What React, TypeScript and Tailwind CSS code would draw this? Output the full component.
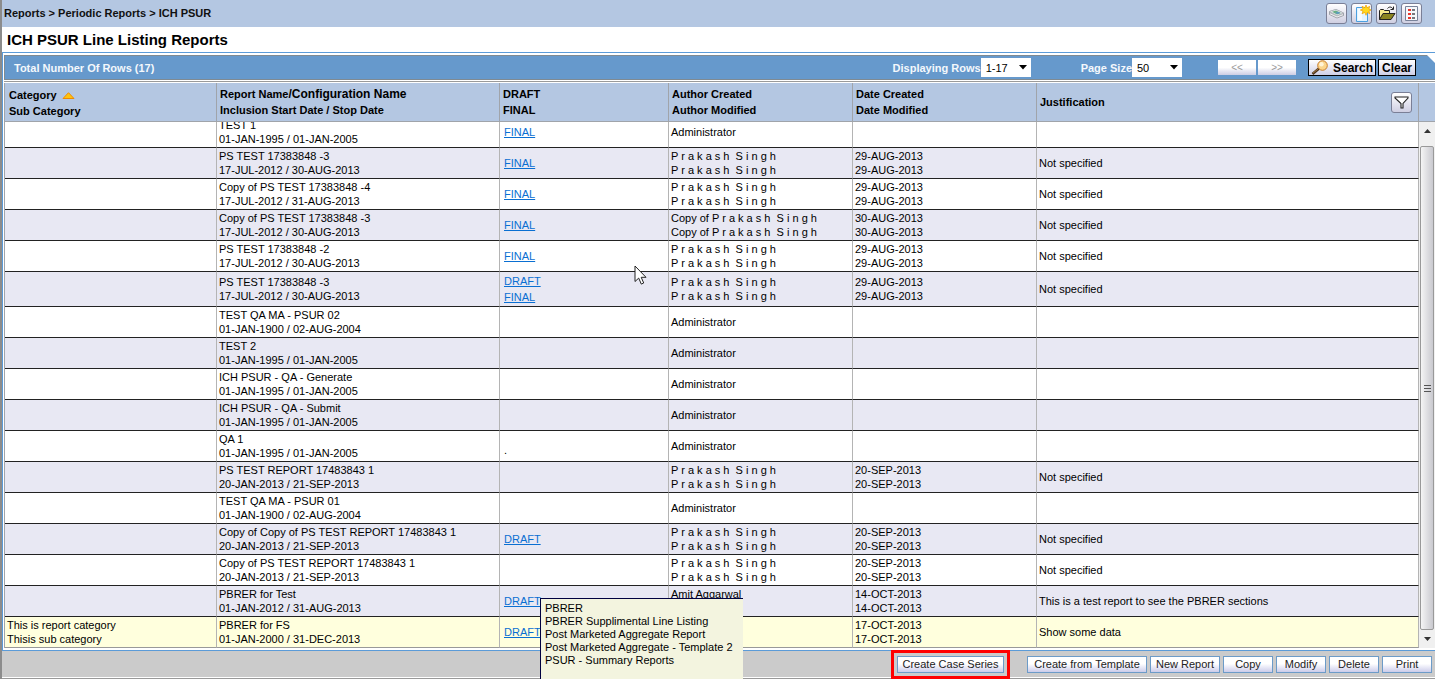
import { useState } from "react";
import clsx from "clsx";

interface ReportRow {
    id: number;
    category?: string[];
    name: string;
    dates: string;
    links: string[];
    authors: string[];
    modified: string[];
    justification?: string;
    note?: string;
}

const singh = "P r a k a s h  S i n g h";

const reports: ReportRow[] = [
    { id: 1, name: "TEST 1", dates: "01-JAN-1995 / 01-JAN-2005", links: ["FINAL"], authors: ["Administrator"], modified: [] },
    { id: 2, name: "PS TEST 17383848 -3", dates: "17-JUL-2012 / 30-AUG-2013", links: ["FINAL"], authors: [singh, singh], modified: ["29-AUG-2013", "29-AUG-2013"], justification: "Not specified" },
    { id: 3, name: "Copy of PS TEST 17383848 -4", dates: "17-JUL-2012 / 31-AUG-2013", links: ["FINAL"], authors: [singh, singh], modified: ["29-AUG-2013", "29-AUG-2013"], justification: "Not specified" },
    { id: 4, name: "Copy of PS TEST 17383848 -3", dates: "17-JUL-2012 / 30-AUG-2013", links: ["FINAL"], authors: ["Copy of " + singh, "Copy of " + singh], modified: ["30-AUG-2013", "30-AUG-2013"], justification: "Not specified" },
    { id: 5, name: "PS TEST 17383848 -2", dates: "17-JUL-2012 / 30-AUG-2013", links: ["FINAL"], authors: [singh, singh], modified: ["29-AUG-2013", "29-AUG-2013"], justification: "Not specified" },
    { id: 6, name: "PS TEST 17383848 -3", dates: "17-JUL-2012 / 30-AUG-2013", links: ["DRAFT", "FINAL"], authors: [singh, singh], modified: ["29-AUG-2013", "29-AUG-2013"], justification: "Not specified" },
    { id: 7, name: "TEST QA MA - PSUR 02", dates: "01-JAN-1900 / 02-AUG-2004", links: [], authors: ["Administrator"], modified: [] },
    { id: 8, name: "TEST 2", dates: "01-JAN-1995 / 01-JAN-2005", links: [], authors: ["Administrator"], modified: [] },
    { id: 9, name: "ICH PSUR - QA - Generate", dates: "01-JAN-1995 / 01-JAN-2005", links: [], authors: ["Administrator"], modified: [] },
    { id: 10, name: "ICH PSUR - QA - Submit", dates: "01-JAN-1995 / 01-JAN-2005", links: [], authors: ["Administrator"], modified: [] },
    { id: 11, name: "QA 1", dates: "01-JAN-1995 / 01-JAN-2005", links: [], authors: ["Administrator"], modified: [], note: "." },
    { id: 12, name: "PS TEST REPORT 17483843 1", dates: "20-JAN-2013 / 21-SEP-2013", links: [], authors: [singh, singh], modified: ["20-SEP-2013", "20-SEP-2013"], justification: "Not specified" },
    { id: 13, name: "TEST QA MA - PSUR 01", dates: "01-JAN-1900 / 02-AUG-2004", links: [], authors: ["Administrator"], modified: [] },
    { id: 14, name: "Copy of Copy of PS TEST REPORT 17483843 1", dates: "20-JAN-2013 / 21-SEP-2013", links: ["DRAFT"], authors: [singh, singh], modified: ["20-SEP-2013", "20-SEP-2013"], justification: "Not specified" },
    { id: 15, name: "Copy of PS TEST REPORT 17483843 1", dates: "20-JAN-2013 / 21-SEP-2013", links: [], authors: [singh, singh], modified: ["20-SEP-2013", "20-SEP-2013"], justification: "Not specified" },
    { id: 16, name: "PBRER for Test", dates: "01-JAN-2012 / 31-AUG-2013", links: ["DRAFT"], authors: ["Amit Aggarwal", ""], modified: ["14-OCT-2013", "14-OCT-2013"], justification: "This is a test report to see the PBRER sections" },
    { id: 17, category: ["This is report category", "Thisis sub category"], name: "PBRER for FS", dates: "01-JAN-2000 / 31-DEC-2013", links: ["DRAFT"], authors: [], modified: ["17-OCT-2013", "17-OCT-2013"], justification: "Show some data" },
];

const templates = [
    "PBRER",
    "PBRER Supplimental Line Listing",
    "Post Marketed Aggregate Report",
    "Post Marketed Aggregate - Template 2",
    "PSUR - Summary Reports",
];

const Columns = () => (
    <colgroup>
        <col className="w-[212px]" />
        <col className="w-[283px]" />
        <col className="w-[169px]" />
        <col className="w-[184px]" />
        <col className="w-[184px]" />
        <col />
    </colgroup>
);

const Lines = ({ items }: { items: string[] }) => (
    <>
        {items.map((item, index) => (
            <div key={index} className="h-[14px] whitespace-pre">{item}</div>
        ))}
    </>
);

// ---- ICONS ----

const DiskIcon = () => (
    <svg width="17" height="17" viewBox="0 0 17 17">
        <path d="M1.500 6.500 8 4.500l7.500 3.500v2.500L9 13 1.500 9.500z" fill="#b4b8bf" stroke="#8b9097" strokeWidth=".7" />
        <path d="M1.500 6.500 8 4.500l7.500 3.500L9 10.500z" fill="#eef1f2" stroke="#a5aab0" strokeWidth=".6" />
        <path d="M4 6.800 8 5.500l5 2.400L9 9.500z" fill="#68ae83" />
        <path d="M7 7.800 10 6.800l2.500 1.200L9.500 9z" fill="#5d99c4" />
        <path d="M2 8.800 9 12l6-2.300" fill="none" stroke="#fff" strokeWidth=".8" />
    </svg>
);

const NewIcon = () => (
    <svg width="18" height="18" viewBox="0 0 18 18">
        <path d="M3.500 2.500h11v14h-11z" fill="#e4f4ff" stroke="#4b9fe0" />
        <path d="M5 4h4v11H5z" fill="#fff" opacity=".7" />
        <path d="m13 0 1.100 2.700L16.800 1.300l-.9 2.800 2.600.9-2.600 1 1 2.800-2.800-1.400L13 10.300l-1.200-2.900L9 8.800 10 6 7.300 5 10 4 9 1.300l2.900 1.400z" fill="#ffd91e" stroke="#f2a100" strokeWidth=".7" />
    </svg>
);

const FolderIcon = () => (
    <svg width="18" height="17" viewBox="0 0 18 17">
        <path d="M1.500 14.500V5.500l1-1h3l1 1h5v3" fill="#f6ea8b" stroke="#222" />
        <path d="M1.500 14.500l3.500-6h12l-4 6z" fill="#8a8420" stroke="#222" />
        <path d="M9.500 3.500c1.500-2 4-2 5.500.5M15.500 1.500v3h-3" fill="none" stroke="#222" />
    </svg>
);

const ListIcon = () => (
    <svg width="17" height="17" viewBox="0 0 17 17">
        <path d="M2.500 1.500h12v14h-12z" fill="#f7f8fb" stroke="#79839a" />
        <path d="M5 4h3v2H5zM5 8h3v2H5zM5 12h3v2H5z" fill="#e8362c" />
        <path d="M9 4h3v2H9zM9 8h3v2H9zM9 12h3v2H9z" fill="#77777d" />
    </svg>
);

const FilterIcon = () => (
    <svg width="15" height="13" viewBox="0 0 15 13">
        <path d="M1 1h13v1L9 7.500V12H7V7.500L1 2z" fill="#fff" stroke="#222" strokeWidth="1.100" />
    </svg>
);

const MagnifierIcon = () => (
    <svg width="18" height="15" viewBox="0 0 18 15">
        <path d="M1.500 14 8 8.500" stroke="#4d3419" strokeWidth="2.600" />
        <path d="M2 13 7 9" stroke="#b98b55" strokeWidth=".8" />
        <circle cx="11.500" cy="5.500" r="4.800" fill="#fbd58c" stroke="#c87c2a" />
        <circle cx="10.500" cy="4.300" r="2.200" fill="#fff3d6" />
    </svg>
);

const Pointer = () => (
    <svg width="13" height="21" viewBox="0 0 13 21">
        <path d="M1 1v15.500l3.700-3.400 2.600 6 2.400-1.100-2.500-5.700H12z" fill="#fff" stroke="#222" />
    </svg>
);

// ---- CONTROLS ----

const IconButton = ({ label, children }: { label: string; children: React.ReactNode }) => (
    <button
        type="button"
        aria-label={label}
        className="flex h-[21px] w-[21px] items-center justify-center overflow-hidden rounded-[3px] border border-[#7a7f96] bg-linear-to-b from-white to-[#cfcfe2]"
    >
        {children}
    </button>
);

const PageButton = ({ label, children }: { label: string; children: React.ReactNode }) => (
    <button
        type="button"
        aria-label={label}
        className="h-[15px] w-[38px] bg-linear-to-b from-white from-50% to-[#cdcde4] text-[10px] leading-none text-[#9a9a9a]"
    >
        {children}
    </button>
);

interface PickerProps {
    id: string;
    label: string;
    options: string[];
    className: string;
}

const Picker = ({ id, label, options, className }: PickerProps) => {
    const [value, setValue] = useState<string>(options[0]);

    return (
        <div className={clsx("flex items-center", className)}>
            <label htmlFor={id} className="font-bold text-[#f4f8fc]">{label}</label>
            <div className="relative">
                <select
                    id={id}
                    value={value}
                    onChange={(event) => setValue(event.target.value)}
                    className="block h-[19px] w-[50px] appearance-none bg-white pl-[5px] text-black"
                >
                    {options.map(option => <option key={option}>{option}</option>)}
                </select>
                <svg width="8" height="5" viewBox="0 0 8 5" className="pointer-events-none absolute top-[7px] right-1">
                    <path d="M0 0h8L4 4.500z" fill="#000" />
                </svg>
            </div>
        </div>
    );
};

const FooterButton = ({ children, className }: { children: React.ReactNode; className?: string }) => (
    <button
        type="button"
        className={clsx(
            "h-[17px] border border-[#6c9bc8] bg-linear-to-b from-white from-45% to-[#ccccea] text-[11px] leading-[14px] whitespace-nowrap text-[#222]",
            className ?? "w-[50px]"
        )}
    >
        {children}
    </button>
);

const headCell = "border-r border-[#a0a4aa] px-[3px] text-left align-middle font-bold";
const bodyCell = "border-r border-b border-r-[#b4b4b4] px-[2px] py-px";

const App = () => {
    return (
        <div className="relative min-h-screen overflow-hidden border-l-2 border-[#8c8c8c] bg-white font-['Liberation_Sans',Arial,sans-serif] text-[11px] leading-[14px] text-black">

            {/* BREADCRUMB */}
            <header className="flex h-[27px] items-center justify-between bg-[#b4c7e2] pr-[13px] pl-[2px]">
                <nav className="pb-[2px] font-bold text-[#111]">Reports &gt; Periodic Reports &gt; ICH PSUR</nav>
                <div className="flex gap-1">
                    <IconButton label="Storage"><DiskIcon /></IconButton>
                    <IconButton label="New"><NewIcon /></IconButton>
                    <IconButton label="Open"><FolderIcon /></IconButton>
                    <IconButton label="List"><ListIcon /></IconButton>
                </div>
            </header>

            <h1 className="pl-[5px] text-[15px] leading-[25px] font-bold">ICH PSUR Line Listing Reports</h1>

            <main className="border-y border-l border-[#5b9bd8] pl-px">

                {/* TOOLBAR */}
                <div className="relative mt-[2px] flex h-[25px] items-center border-y border-l border-[#7f8a92] bg-[#6699cc] pr-[19px] pl-[9px]">
                    <div className="flex-1 font-bold text-[#f4f8fc]">Total Number Of Rows (17)</div>
                    <Picker id="rows" label="Displaying Rows" options={["1-17"]} className="mr-[50px]" />
                    <Picker id="size" label="Page Size" options={["50", "100"]} className="mr-9" />
                    <div className="mr-3 flex gap-[2px]">
                        <PageButton label="Previous page">&lt;&lt;</PageButton>
                        <PageButton label="Next page">&gt;&gt;</PageButton>
                    </div>
                    <div className="flex gap-[2px] text-[12px] font-bold">
                        <button type="button" className="flex h-[17px] w-[68px] items-center justify-center gap-1 border border-black bg-linear-to-b from-white to-[#cfcfe6]">
                            <MagnifierIcon />
                            Search
                        </button>
                        <button type="button" className="flex h-[17px] w-[38px] items-center justify-center border border-black bg-linear-to-b from-white to-[#cfcfe6]">
                            Clear
                        </button>
                    </div>
                    <svg width="8" height="8" viewBox="0 0 8 8" className="absolute top-[-1px] right-0">
                        <path d="M0 0h8v8z" fill="#fff" />
                    </svg>
                </div>

                {/* COLUMN TITLES */}
                <div className="mt-px border-t border-[#9a9a9a] pt-px">
                    <div className="flex border-b border-l border-[#a0a4aa] bg-[#b4c7e2]">
                        <table className="flex-1 table-fixed border-separate border-spacing-0 leading-4">
                            <Columns />
                            <thead>
                                <tr className="h-[38px]">
                                    <th className={headCell}>
                                        <div className="pt-[2px] pl-px">
                                            <span className="flex items-center gap-[5px]">
                                                Category
                                                <svg width="13" height="7" viewBox="0 0 13 7">
                                                    <path d="M6.500.7 12 6.500H1z" fill="#ffc40c" stroke="#ee8a00" />
                                                </svg>
                                            </span>
                                            Sub Category
                                        </div>
                                    </th>
                                    <th className={headCell}>
                                        <div className="whitespace-nowrap">Report Name<span className="text-[12px]">/Configuration Name</span></div>
                                        <div>Inclusion Start Date / Stop Date</div>
                                    </th>
                                    <th className={headCell}>DRAFT<br />FINAL</th>
                                    <th className={headCell}>Author Created<br />Author Modified</th>
                                    <th className={headCell}>Date Created<br />Date Modified</th>
                                    <th className={headCell}>
                                        <div className="flex items-center justify-between pr-[3px]">
                                            Justification
                                            <IconButton label="Filter"><FilterIcon /></IconButton>
                                        </div>
                                    </th>
                                </tr>
                            </thead>
                        </table>
                        <div className="w-4" />
                    </div>
                </div>

                {/* REPORTS */}
                <div className="flex overflow-hidden border-l border-[#a0a4aa]">
                    <table className="-mt-[5px] flex-1 table-fixed border-separate border-spacing-0">
                        <Columns />
                        <tbody>
                            {reports.map((report, index) => {
                                const last = index === reports.length - 1;
                                const cell = clsx(bodyCell, last ? "border-b-[#999]" : "border-b-[#222]");
                                return (
                                    <tr
                                        key={report.id}
                                        className={clsx("h-[31px]", last ? "bg-[#ffffdd]" : index % 2 ? "bg-[#e8e8f3]" : "bg-white")}
                                    >
                                        <td className={cell}><Lines items={report.category ?? []} /></td>
                                        <td className={cell}><Lines items={[report.name, report.dates]} /></td>
                                        <td className={cell}>
                                            <div className="flex flex-col items-start pl-[2px] leading-4">
                                                {report.links.map(link => (
                                                    <a key={link} href="#" className="text-[#0a6fd2] underline">{link}</a>
                                                ))}
                                                {report.note && <span className="pt-2">{report.note}</span>}
                                            </div>
                                        </td>
                                        <td className={cell}><Lines items={report.authors} /></td>
                                        <td className={cell}><Lines items={report.modified} /></td>
                                        <td className={cell}>{report.justification}</td>
                                    </tr>
                                );
                            })}
                        </tbody>
                    </table>

                    {/* SCROLLBAR */}
                    <div className="flex w-4 flex-col items-center bg-[#f0f0f0]">
                        <div className="flex h-6 items-start pt-[7px]">
                            <svg width="7" height="4" viewBox="0 0 7 4"><path d="M3.500 0 7 4H0z" fill="#333" /></svg>
                        </div>
                        <div className="flex w-[14px] flex-1 flex-col items-center justify-center gap-[2px] rounded-[2px] border border-[#999] bg-linear-to-r from-[#f5f5f5] to-[#c9c9cf]">
                            <span className="h-px w-[7px] bg-[#555]" />
                            <span className="h-px w-[7px] bg-[#555]" />
                            <span className="h-px w-[7px] bg-[#555]" />
                        </div>
                        <div className="flex h-[18px] items-center">
                            <svg width="7" height="4" viewBox="0 0 7 4"><path d="M0 0h7L3.500 4z" fill="#333" /></svg>
                        </div>
                    </div>
                </div>
                <div className="h-[2px]" />
            </main>

            {/* ACTIONS */}
            <footer className="flex h-[27px] items-center justify-end gap-[3px] border-b border-white bg-[#cbcbcb] pr-[3px]">
                <div className="relative mr-5 flex">
                    <FooterButton className="w-[107px]">Create Case Series</FooterButton>
                    <div className="pointer-events-none absolute -inset-x-[6px] -inset-y-[6px] border-3 border-[#ff0000]" />
                </div>
                <FooterButton className="w-[120px]">Create from Template</FooterButton>
                <FooterButton className="w-[70px]">New Report</FooterButton>
                <FooterButton>Copy</FooterButton>
                <FooterButton>Modify</FooterButton>
                <FooterButton>Delete</FooterButton>
                <FooterButton>Print</FooterButton>
            </footer>
            <div className="h-px bg-[#999]" />

            {/* TEMPLATE TOOLTIP */}
            <div role="tooltip" className="absolute bottom-0 left-[538px] h-[81px] w-[203px] border-t border-l border-[#000040] bg-[#f3f4df] px-1 pt-[3px] leading-[13px] whitespace-nowrap">
                {templates.map(template => <div key={template}>{template}</div>)}
            </div>

            <div className="pointer-events-none absolute top-[265px] left-[632px]">
                <Pointer />
            </div>
        </div>
    );
};

export default App;
